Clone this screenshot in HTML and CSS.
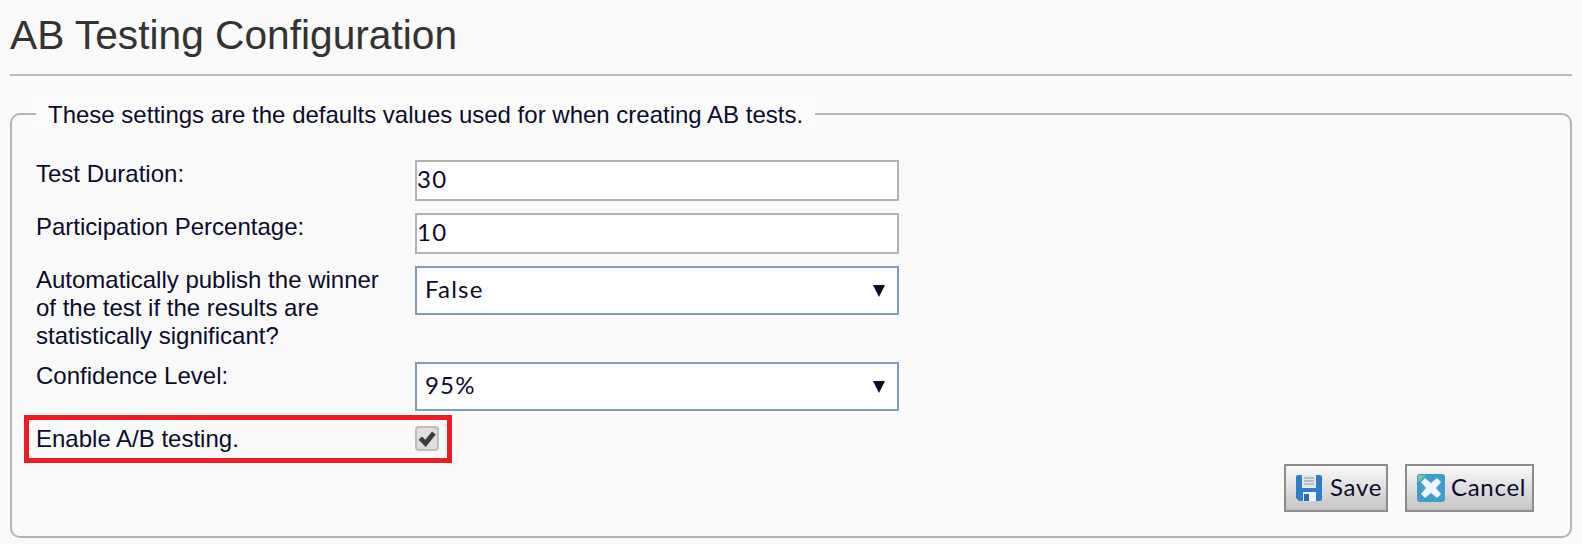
FILE: index.html
```html
<!DOCTYPE html>
<html lang="en">
<head>
    <meta charset="UTF-8">
    <title>AB Testing Configuration</title>
    <link rel="stylesheet" href="styles.css">
</head>
<body>
    <h1 class="title">AB Testing Configuration</h1>
    <form action="#">
        <fieldset class="settings">
            <legend>These settings are the defaults values used for when creating AB tests.</legend>
            <div class="row row-input">
                <label>Test Duration:</label>
                <input class="field" type="text" value="30">
            </div>
            <div class="row row-input">
                <label>Participation Percentage:</label>
                <input class="field" type="text" value="10">
            </div>
            <div class="row row-long">
                <label>Automatically publish the winner of the test if the results are statistically significant?</label>
                <div class="picker"><span>False</span><i class="arrow"></i></div>
            </div>
            <div class="row row-select">
                <label>Confidence Level:</label>
                <div class="picker"><span>95%</span><i class="arrow"></i></div>
            </div>
            <div class="row row-check">
                <label>Enable A/B testing.</label>
                <span class="check">
                    <svg viewBox="0 0 24 24" width="20" height="20"><path d="M2 13l4-4 4 4 8-10 4.500 3.500-12 15z" fill="#3c3c3c"/></svg>
                </span>
                <div class="highlight"></div>
            </div>
            <div class="actions">
                <button class="btn btn-save" type="button">
                    <svg class="ico" viewBox="0 0 28 28" width="28" height="28">
                        <path d="M1 3q0-2 2-2h22q2 0 2 2v22q0 2-2 2H4l-3-3z" fill="#2f7fc8"/>
                        <rect x="7" y="1" width="14" height="13" fill="#e6e8ea"/>
                        <path d="M9 4h10M9 7h10M9 10h10" stroke="#aab0b6" stroke-width="1.500"/>
                        <rect x="8" y="18" width="13" height="9" fill="#f2f4f6"/>
                        <rect x="9" y="20" width="5" height="7" fill="#2a6db0"/>
                    </svg>
                    <span>Save</span>
                </button>
                <button class="btn btn-cancel" type="button">
                    <svg class="ico" viewBox="0 0 28 28" width="28" height="28">
                        <rect x="0" y="0" width="28" height="28" rx="3" fill="#3f9ccb"/>
                        <path d="M1 1h8l-8 8z" fill="#6fc7a0"/>
                        <path d="M8 4l6 5 6-5 4 4-5 6 5 6-4 4-6-5-6 5-4-4 5-6-5-6z" fill="#f1f6f9"/>
                    </svg>
                    <span>Cancel</span>
                </button>
            </div>
        </fieldset>
    </form>
</body>
</html>
```

FILE: styles.css
```css
* {box-sizing: border-box;}
html, body {height: 100%;}
body {margin: 0; padding: 0 10px; background: #fafafa; font-family: "Liberation Sans", Arial, sans-serif; color: #0b0b2b; overflow: hidden;}

.title {margin: 0; height: 76px; padding-top: 11px; font-size: 40.700px; line-height: 48px; font-weight: normal; color: #333; border-bottom: 2px solid #bbb;}

.settings {position: relative; margin: 24px 0 0; width: 1562px; height: 438px; padding: 0 24px; border: 2px solid #b4b4b4; border-radius: 10px;}
.settings legend {margin-left: 0; padding: 2px 12px 0; font-size: 24px; line-height: 26px; background: #fbfbfb;}

.row {position: relative; display: grid; grid-template-columns: 379px 484px; align-items: start; font-size: 24px; line-height: 28px;}
.row label {display: block; padding-right: 10px;}
.row-input {height: 53px;}
.row-long {height: 96px;}
.row-select {height: 53px;}
.row-check {height: 50px; padding-top: 11px;}
.row-check label {margin-top: -1px;}
.row:first-of-type {margin-top: 32px;}

.field {width: 484px; height: 41px; padding: 0 0 4px; border: 2px solid #b2b2b2; background: #fff; color: #0b0b2b; font-family: Lato, sans-serif; font-size: 24px; letter-spacing: 1.300px; outline: none;}

.picker {display: flex; align-items: center; justify-content: space-between; width: 484px; height: 49px; padding: 0 12px 4px 8px; border: 2px solid #7f9db9; background: #fff; font-family: Lato, sans-serif; font-size: 24px; letter-spacing: 1.200px;}
.arrow {width: 0; height: 0; margin-top: 4px; border-left: 6px solid transparent; border-right: 6px solid transparent; border-top: 12px solid #0b0b2b;}

.check {display: flex; align-items: center; justify-content: center; width: 24px; height: 25px; border: 2px solid #bcbcbc; border-radius: 4px; background: #dedede;}
.highlight {position: absolute; left: -12px; top: 0; width: 428px; height: 48px; border: 5px solid #ed1c24; pointer-events: none;}

.actions {position: absolute; right: 36px; bottom: 24px; display: flex; gap: 17px;}
.btn {display: flex; align-items: center; gap: 7px; height: 48px; padding: 0 6px 3px 9px; border: 2px solid #8c8c8c; background: linear-gradient(#fafafa, #c4c4c4); color: #0b0b2b; font-family: Lato, sans-serif; font-size: 24px; letter-spacing: 0.700px;}
.btn-save {width: 104px;}
.btn-cancel {width: 129px; padding-left: 10px; gap: 6px;}
.ico {filter: blur(0.6px); flex: none; margin-top: 3px;}
```
